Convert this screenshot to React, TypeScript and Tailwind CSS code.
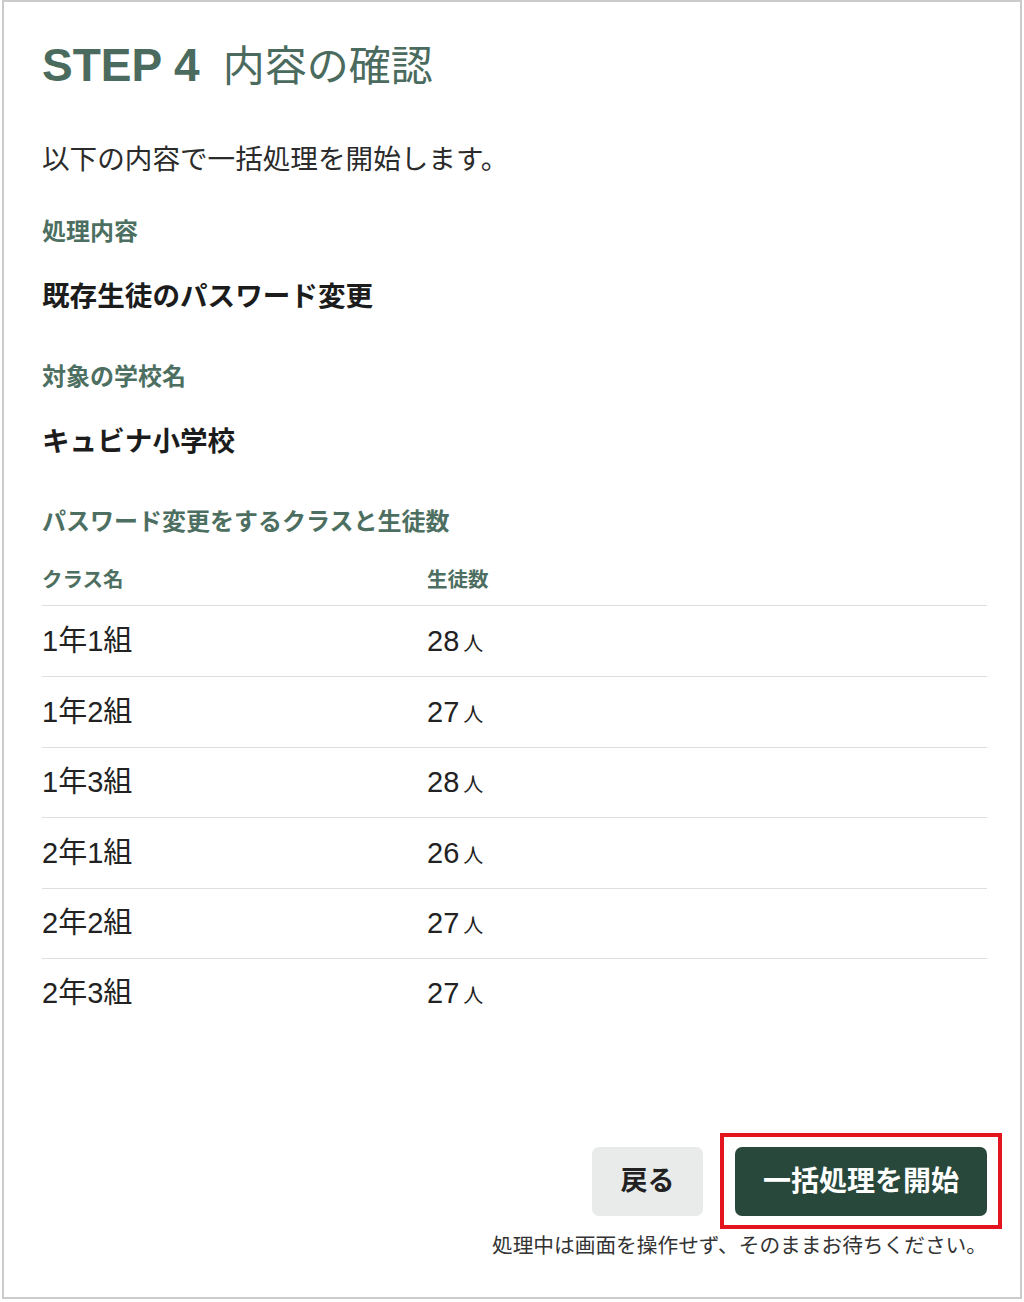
import React from 'react';

type ClassRow = { name: string; count: number };

const classes: ClassRow[] = [
  { name: '1年1組', count: 28 },
  { name: '1年2組', count: 27 },
  { name: '1年3組', count: 28 },
  { name: '2年1組', count: 26 },
  { name: '2年2組', count: 27 },
  { name: '2年3組', count: 27 },
];

const font = "font-['Liberation_Sans','Noto_Sans_CJK_JP',sans-serif]";

function Label({ children, className = '' }: { children: React.ReactNode; className?: string }) {
  return <p className={`text-[24px] leading-[32px] font-bold text-[#4d6f61] ${className}`}>{children}</p>;
}

function Value({ children }: { children: React.ReactNode }) {
  return <p className="mt-[29px] text-[27.6px] leading-[40px] font-bold text-[#1c1c1c]">{children}</p>;
}

export default function App() {
  return (
    <div className={`h-[1302px] w-[1024px] bg-white pl-[2px] pr-[2px] pb-[3px] ${font}`}>
      <div className="flex h-full flex-col border-2 border-[#cbcbcb] pl-[38px] pr-[33px] pt-[35px] pb-[37px]">
        <h1 className="flex items-baseline leading-[56px] text-[#4a6b5d]">
          <span className="text-[46px] font-bold">STEP 4</span>
          <span className="ml-[23px] text-[42px] font-normal">内容の確認</span>
        </h1>

        <p className="mt-[45px] text-[27.6px] leading-[40px] text-[#2b2b2b]">以下の内容で一括処理を開始します。</p>

        <Label className="mt-[36px]">処理内容</Label>
        <Value>既存生徒のパスワード変更</Value>

        <Label className="mt-[44px]">対象の学校名</Label>
        <Value>キュビナ小学校</Value>

        <Label className="mt-[44px]">パスワード変更をするクラスと生徒数</Label>

        <div className="mt-[28px]">
          <div className="grid grid-cols-[385px_1fr] border-b border-[#dedede] pb-[11px] text-[20.5px] leading-[28px] font-bold text-[#4d6f61]">
            <span>クラス名</span>
            <span>生徒数</span>
          </div>
          {classes.map((c, i) => (
            <div
              key={c.name}
              className={`grid h-[70.4px] grid-cols-[385px_1fr] items-center pt-[1px] text-[29px] text-[#222] ${i > 0 ? 'border-t border-[#dedede]' : ''}`}
            >
              <span>{c.name}</span>
              <span>
                {c.count}
                <span className="ml-[4px] text-[20px]">人</span>
              </span>
            </div>
          ))}
        </div>

        <div className="mt-auto">
          <div className="flex justify-end gap-[32px]">
            <button className="h-[69px] w-[111px] rounded-[7px] bg-[#e9ebea] text-[27px] font-bold text-[#222]">戻る</button>
            <div className="relative">
              <span className="pointer-events-none absolute -top-[14px] -right-[15px] -bottom-[13px] -left-[15px] border-[4px] border-[#e3141d]" />
              <button className="h-[69px] w-[252px] rounded-[7px] bg-[#27483b] text-[28px] font-bold text-white">一括処理を開始</button>
            </div>
          </div>
          <p className="mt-[16px] text-right text-[20.7px] leading-[28px] text-[#333]">処理中は画面を操作せず、そのままお待ちください。</p>
        </div>
      </div>
    </div>
  );
}
